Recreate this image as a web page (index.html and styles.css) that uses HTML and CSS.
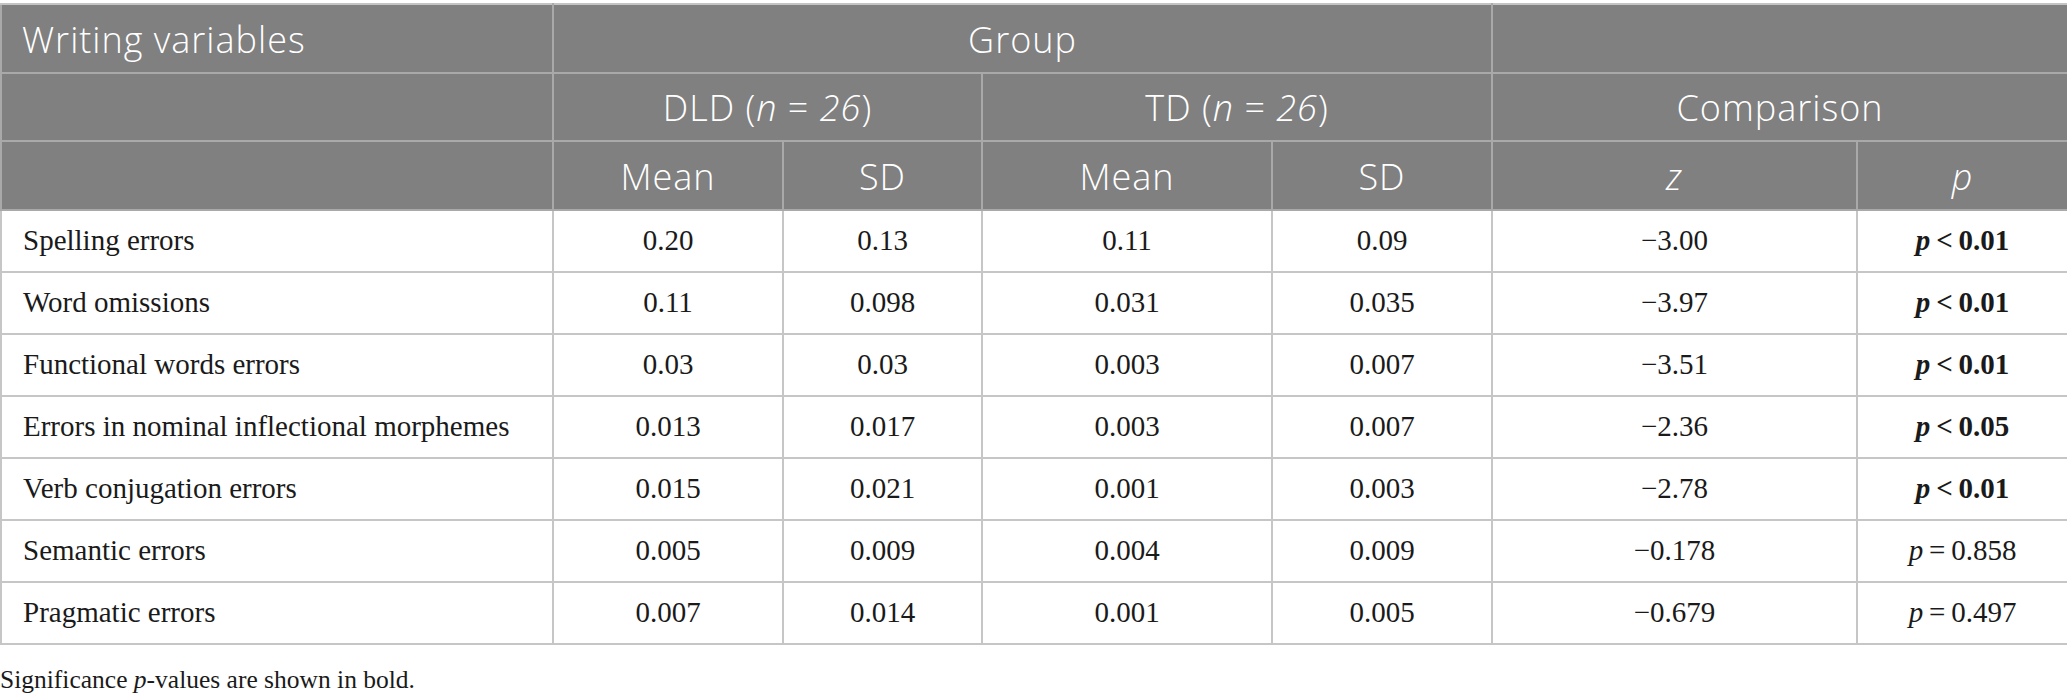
FILE: index.html
```html
<!DOCTYPE html>
<html lang="en">
<head>
<meta charset="utf-8">
<title>Writing variables</title>
<link rel="stylesheet" href="styles.css">
</head>
<body>
<div class="page">
  <table class="data">
    <colgroup>
      <col class="c1"><col class="c2"><col class="c3"><col class="c4"><col class="c5"><col class="c6"><col class="c7">
    </colgroup>
    <thead>
      <tr class="hrow">
        <th class="left">Writing variables</th>
        <th colspan="4">Group</th>
        <th colspan="2"></th>
      </tr>
      <tr class="hrow">
        <th></th>
        <th colspan="2">DLD (<i>n</i> = <i>26</i>)</th>
        <th colspan="2">TD (<i>n</i> = <i>26</i>)</th>
        <th colspan="2">Comparison</th>
      </tr>
      <tr class="hrow">
        <th></th>
        <th>Mean</th>
        <th>SD</th>
        <th>Mean</th>
        <th>SD</th>
        <th><i>z</i></th>
        <th><i>p</i></th>
      </tr>
    </thead>
    <tbody>
      <tr><td class="left">Spelling errors</td><td>0.20</td><td>0.13</td><td>0.11</td><td>0.09</td><td>−3.00</td><td class="sig"><i>p</i>&#8201;&lt;&#8201;0.01</td></tr>
      <tr><td class="left">Word omissions</td><td>0.11</td><td>0.098</td><td>0.031</td><td>0.035</td><td>−3.97</td><td class="sig"><i>p</i>&#8201;&lt;&#8201;0.01</td></tr>
      <tr><td class="left">Functional words errors</td><td>0.03</td><td>0.03</td><td>0.003</td><td>0.007</td><td>−3.51</td><td class="sig"><i>p</i>&#8201;&lt;&#8201;0.01</td></tr>
      <tr><td class="left">Errors in nominal inflectional morphemes</td><td>0.013</td><td>0.017</td><td>0.003</td><td>0.007</td><td>−2.36</td><td class="sig"><i>p</i>&#8201;&lt;&#8201;0.05</td></tr>
      <tr><td class="left">Verb conjugation errors</td><td>0.015</td><td>0.021</td><td>0.001</td><td>0.003</td><td>−2.78</td><td class="sig"><i>p</i>&#8201;&lt;&#8201;0.01</td></tr>
      <tr><td class="left">Semantic errors</td><td>0.005</td><td>0.009</td><td>0.004</td><td>0.009</td><td>−0.178</td><td><i>p</i>&#8201;=&#8201;0.858</td></tr>
      <tr><td class="left">Pragmatic errors</td><td>0.007</td><td>0.014</td><td>0.001</td><td>0.005</td><td>−0.679</td><td><i>p</i>&#8201;=&#8201;0.497</td></tr>
    </tbody>
  </table>
  <p class="note">Significance <i>p</i>-values are shown in bold.</p>
</div>
</body>
</html>
```
FILE: styles.css
```css
html, body {
  margin: 0;
  padding: 0;
  background: #ffffff;
}

.page {
  padding-top: 3px;
}

.data {
  border-collapse: collapse;
  table-layout: fixed;
  width: 2067px;
}

.c1 { width: 552px; }
.c2 { width: 230px; }
.c3 { width: 199px; }
.c4 { width: 290px; }
.c5 { width: 220px; }
.c6 { width: 365px; }
.c7 { width: 211px; }

.data th {
  background: #7f807f;
  color: #ffffff;
  font-family: "Open Sans", "Noto Sans", sans-serif;
  font-weight: 300;
  font-size: 36px;
  letter-spacing: 1px;
  line-height: 1.2;
  text-align: center;
  vertical-align: middle;
  border: 2px solid #a9a9a9;
  padding: 2px 20px 0 20px;
  height: 64.5px;
}

.data thead tr:first-child th {
  border-top-color: #c4c4c4;
}

.data td {
  font-family: "Liberation Serif", "Times New Roman", serif;
  font-size: 29px;
  line-height: 1.2;
  color: #1a1a1a;
  text-align: center;
  vertical-align: middle;
  border: 2px solid #c6c6c6;
  padding: 0 20px;
  height: 60px;
}

.data .left {
  text-align: left;
  padding-left: 21px;
}

.data th.left {
  padding-left: 20px;
}

.data td.sig {
  font-weight: bold;
}

.note {
  margin: 20px 0 0 0;
  font-family: "Liberation Serif", "Times New Roman", serif;
  font-size: 25.5px;
  color: #1a1a1a;
}
```
